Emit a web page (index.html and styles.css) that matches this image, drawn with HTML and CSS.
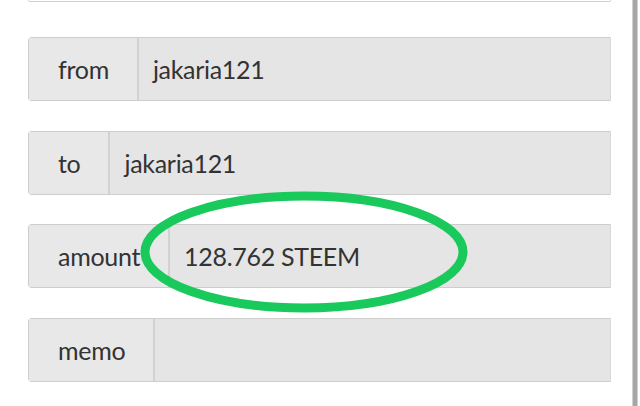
FILE: index.html
```html
<!DOCTYPE html>
<html>
<head>
<meta charset="utf-8">
<link rel="stylesheet" href="styles.css">
</head>
<body>
<div class="page">
  <main class="form">
    <div class="prev"></div>
    <div class="row">
      <span class="label">from</span>
      <span class="field">jakaria121</span>
    </div>
    <div class="row">
      <span class="label">to</span>
      <span class="field">jakaria121</span>
    </div>
    <div class="row">
      <span class="label">amount</span>
      <span class="field">128.762 STEEM</span>
    </div>
    <div class="row">
      <span class="label">memo</span>
      <span class="field"></span>
    </div>
    <svg class="mark" width="640" height="406" viewBox="0 0 640 406">
      <ellipse cx="304" cy="252" rx="159" ry="56" fill="none" stroke="#19c95b" stroke-width="9"/>
    </svg>
  </main>
  <div class="scroll"></div>
</div>
</body>
</html>
```
FILE: styles.css
```css
html, body {
  margin: 0;
  padding: 0;
  background: #fff;
}
body {
  width: 640px;
  height: 406px;
  overflow: hidden;
  font-family: Lato, "Noto Sans", sans-serif;
  color: #333;
}
.page {
  display: flex;
  height: 406px;
}
.form {
  width: 583px;
  margin-left: 28px;
  display: flex;
  flex-direction: column;
  gap: 29.5px;
}
.prev {
  height: 1px;
  margin-bottom: 5.5px;
  border: 1px solid #cfcfcf;
  border-top: none;
  border-radius: 0 0 3px 3px;
  background: #fff;
}
.row {
  display: flex;
  height: 64px;
  box-sizing: border-box;
  border: 1px solid #cdcdcd;
  border-right-color: #d8d8d8;
  border-radius: 4px 0 0 4px;
  background: #e6e6e6;
  font-size: 25px;
  letter-spacing: -0.3px;
}
.label {
  display: flex;
  align-items: center;
  padding: 0 28px 0 29px;
  border-right: 2px solid #d2d2d2;
  background: #e8e8e8;
}
.field {
  display: flex;
  align-items: center;
  flex: 1;
  padding-left: 14px;
  background: #e5e5e5;
}
.mark {
  position: absolute;
  left: 0;
  top: 0;
  pointer-events: none;
}
.scroll {
  width: 4px;
  margin-left: 22px;
  background: #a6a6a6;
  box-shadow: -1px 0 0 #d0d0d0, 1px 0 0 #d0d0d0;
}
```
